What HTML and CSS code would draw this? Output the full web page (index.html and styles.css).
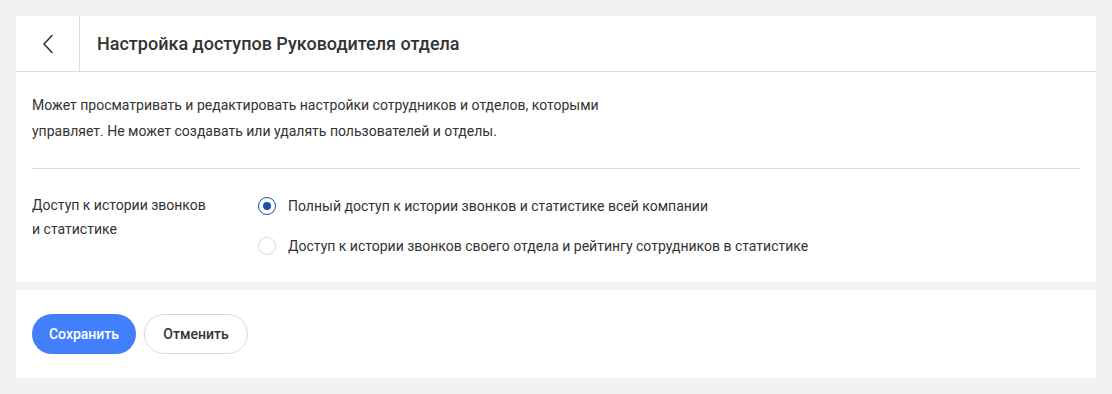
FILE: index.html
```html
<!DOCTYPE html>
<html lang="ru">
<head>
    <meta charset="UTF-8">
    <title>Настройка доступов</title>
    <link rel="stylesheet" href="styles.css">
</head>
<body>

    <div class="page">
        <!-- Settings card -->
        <div class="card">
            <div class="header">
                <button class="back-btn" aria-label="Назад">
                    <svg width="12" height="20" viewBox="0 0 12 20">
                        <path d="M10 1.5 L2 10 L10 18.5" fill="none" stroke="#333" stroke-width="1.6" stroke-linecap="round" stroke-linejoin="round"/>
                    </svg>
                </button>
                <h1 class="title">Настройка доступов Руководителя отдела</h1>
            </div>

            <div class="body">
                <p class="description">Может просматривать и редактировать настройки сотрудников и отделов, которыми управляет. Не может создавать или удалять пользователей и отделы.</p>

                <div class="divider"></div>

                <div class="setting-row">
                    <div class="setting-label">Доступ к истории звонков<br>и статистике</div>
                    <div class="options">
                        <label class="radio">
                            <input type="radio" name="access" checked>
                            <span class="radio-mark"></span>
                            Полный доступ к истории звонков и статистике всей компании
                        </label>
                        <label class="radio">
                            <input type="radio" name="access">
                            <span class="radio-mark"></span>
                            Доступ к истории звонков своего отдела и рейтингу сотрудников в статистике
                        </label>
                    </div>
                </div>
            </div>
        </div>

        <!-- Actions -->
        <div class="card actions">
            <button class="btn btn-primary">Сохранить</button>
            <button class="btn btn-secondary">Отменить</button>
        </div>
    </div>

</body>
</html>
```

FILE: styles.css
```css
/* Global Styles */
* {
    margin: 0;
    padding: 0;
    box-sizing: border-box;
}

body {
    font-family: Roboto, 'Liberation Sans', sans-serif;
    font-size: 14px;
    color: #333;
    background-color: #f0f2f1;
}

.page {
    padding: 16px;
    display: flex;
    flex-direction: column;
    gap: 8px;
}

.card {
    background-color: #fff;
}

/* Header */
.header {
    display: flex;
    align-items: center;
    height: 56px;
    border-bottom: 1px solid #dcdcdc;
}

.back-btn {
    width: 64px;
    height: 55px;
    display: flex;
    align-items: center;
    justify-content: center;
    background: none;
    border: none;
    border-right: 1px solid #dcdcdc;
    cursor: pointer;
}

.title {
    margin-left: 17px;
    font-size: 18px;
    font-weight: 500;
    color: #333;
}

/* Body */
.body {
    padding: 20px 16px 24px;
}

.description {
    max-width: 600px;
    line-height: 26px;
}

.divider {
    height: 1px;
    background-color: #dcdcdc;
    margin: 24px 0;
}

.setting-row {
    display: flex;
}

.setting-label {
    width: 226px;
    line-height: 24px;
}

.options {
    display: flex;
    flex-direction: column;
    gap: 16px;
    padding-top: 1px;
}

.radio {
    display: flex;
    align-items: center;
    gap: 12px;
    line-height: 24px;
    cursor: pointer;
}

.radio input {
    display: none;
}

.radio-mark {
    width: 18px;
    height: 18px;
    border: 1px solid #d9d9d9;
    border-radius: 50%;
    display: flex;
    align-items: center;
    justify-content: center;
}

.radio input:checked + .radio-mark {
    border: 1.5px solid #1552a8;
}

.radio input:checked + .radio-mark::after {
    content: '';
    width: 8px;
    height: 8px;
    border-radius: 50%;
    background-color: #1552a8;
}

/* Buttons */
.actions {
    display: flex;
    gap: 8px;
    padding: 24px 16px;
}

.btn {
    height: 40px;
    width: 104px;
    border-radius: 20px;
    font-family: inherit;
    font-size: 14px;
    font-weight: 500;
    cursor: pointer;
}

.btn-primary {
    background-color: #427ffb;
    color: #fff;
    border: none;
}

.btn-secondary {
    background-color: #fff;
    color: #333;
    border: 1px solid #d9d9d9;
}
```
